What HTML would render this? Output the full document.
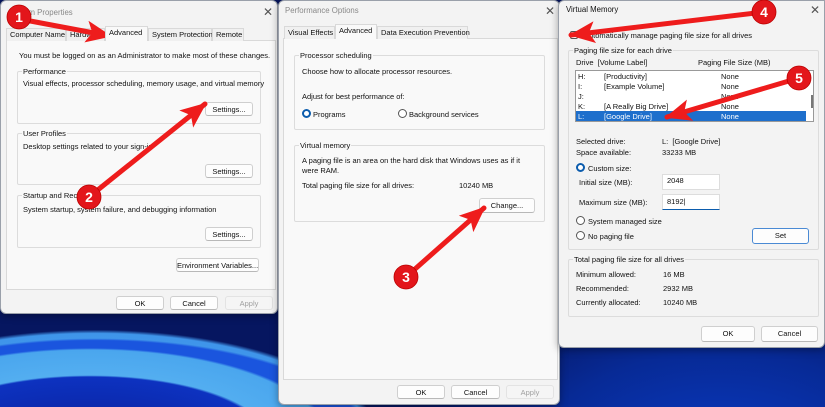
<!DOCTYPE html>
<html><head><meta charset="utf-8"><style>
*{margin:0;padding:0;box-sizing:border-box}
body{width:825px;height:407px;overflow:hidden;position:relative;font-family:"Liberation Sans",sans-serif;font-size:7.5px;color:#111;
background:
radial-gradient(ellipse 250px 90px at 90px 440px,#0a1f9a 0%,#0d32c0 70%,transparent 72%),
radial-gradient(ellipse 262px 100px at 90px 440px,#6cc4f6 0%,#4aa6ee 90%,transparent 92%),
radial-gradient(ellipse 290px 110px at 95px 445px,#1a55de 0%,#1a55de 95%,transparent 97%),
radial-gradient(ellipse 300px 120px at 95px 445px,#4aa0ee 0%,#3f95ea 93%,transparent 96%),
radial-gradient(ellipse 420px 260px at 720px 470px,#0a3cc8 0%,#072a96 45%,#061660 75%),
linear-gradient(90deg,#1444d8,#1040cc 35%,#0a2a90 60%,#061a55)}
.w{position:absolute;background:#f3f3f3;border:1px solid #9aa0aa;border-radius:6px;box-shadow:0 2px 8px rgba(0,0,0,.35);overflow:hidden}
.t{position:absolute;white-space:nowrap;line-height:9px}
.g{color:#888}
.btn{position:absolute;background:#fdfdfd;border:1px solid #cfcfcf;border-bottom-color:#b8b8b8;border-radius:3px;text-align:center;line-height:13px;white-space:nowrap}
.dis{background:#f5f5f5;color:#a0a0a0;border-color:#e3e3e3}
.grp{position:absolute;border:1px solid #dcdcdc;border-radius:2px}
.gl{position:absolute;background:#f9f9f9;padding:0 1px;line-height:9px;white-space:nowrap}
.panel{position:absolute;background:#f9f9f9;border:1px solid #d9d9d9}
.tab{position:absolute;line-height:12px;white-space:nowrap;border:1px solid #d9d9d9;border-bottom:none;background:#f0f0f0;padding:0 3px;height:13px}
.tab.a{background:#f9f9f9;height:15px;z-index:2}
.x{position:absolute;font-size:12px;color:#555;line-height:12px}
.rad{position:absolute;width:9px;height:9px;border-radius:50%;border:1px solid #555;background:#fff}
.rad.on{border:2.5px solid #0b5cad;background:#fff}
</style></head><body>

<!-- Window 1 -->
<div class="w" style="left:0;top:0;width:278px;height:314px">
 <div class="t g" style="left:8px;top:7px;font-size:7.8px">System Properties</div>
 <div class="x" style="left:262px;top:5px">✕</div>
 <div class="panel" style="left:5px;top:39px;width:270px;height:250px"></div>
 <div class="tab" style="left:5px;top:27px;width:60px">Computer Name</div>
 <div class="tab" style="left:65px;top:27px;width:39px">Hardware</div>
 <div class="tab a" style="left:104px;top:25px;width:43px">Advanced</div>
 <div class="tab" style="left:147px;top:27px;width:64px">System Protection</div>
 <div class="tab" style="left:211px;top:27px;width:32px">Remote</div>
 <div class="t" style="left:18px;top:50px">You must be logged on as an Administrator to make most of these changes.</div>
 <div class="grp" style="left:16px;top:70px;width:244px;height:53px"></div>
 <div class="gl" style="left:21px;top:66px">Performance</div>
 <div class="t" style="left:22px;top:78px">Visual effects, processor scheduling, memory usage, and virtual memory</div>
 <div class="btn" style="left:204px;top:101px;width:48px;height:14px">Settings...</div>
 <div class="grp" style="left:16px;top:132px;width:244px;height:52px"></div>
 <div class="gl" style="left:21px;top:128px">User Profiles</div>
 <div class="t" style="left:22px;top:141px">Desktop settings related to your sign-in</div>
 <div class="btn" style="left:204px;top:163px;width:48px;height:14px">Settings...</div>
 <div class="grp" style="left:16px;top:194px;width:244px;height:53px"></div>
 <div class="gl" style="left:21px;top:190px">Startup and Recovery</div>
 <div class="t" style="left:22px;top:204px">System startup, system failure, and debugging information</div>
 <div class="btn" style="left:204px;top:226px;width:48px;height:14px">Settings...</div>
 <div class="btn" style="left:175px;top:257px;width:83px;height:14px">Environment Variables...</div>
 <div class="btn" style="left:115px;top:295px;width:48px;height:14px">OK</div>
 <div class="btn" style="left:169px;top:295px;width:48px;height:14px">Cancel</div>
 <div class="btn dis" style="left:224px;top:295px;width:48px;height:14px">Apply</div>
</div>

<!-- Window 2 -->
<div class="w" style="left:278px;top:0;width:282px;height:405px">
 <div class="t g" style="left:6px;top:5px;font-size:7.8px">Performance Options</div>
 <div class="x" style="left:266px;top:4px">✕</div>
 <div class="panel" style="left:4px;top:37px;width:275px;height:342px"></div>
 <div class="tab" style="left:5px;top:25px;width:51px">Visual Effects</div>
 <div class="tab a" style="left:56px;top:23px;width:42px">Advanced</div>
 <div class="tab" style="left:98px;top:25px;width:91px">Data Execution Prevention</div>
 <div class="grp" style="left:15px;top:54px;width:251px;height:75px"></div>
 <div class="gl" style="left:20px;top:50px">Processor scheduling</div>
 <div class="t" style="left:23px;top:66px">Choose how to allocate processor resources.</div>
 <div class="t" style="left:23px;top:91px">Adjust for best performance of:</div>
 <div class="rad on" style="left:23px;top:108px"></div>
 <div class="t" style="left:34px;top:109px">Programs</div>
 <div class="rad" style="left:119px;top:108px"></div>
 <div class="t" style="left:130px;top:109px">Background services</div>
 <div class="grp" style="left:15px;top:144px;width:251px;height:77px"></div>
 <div class="gl" style="left:20px;top:140px">Virtual memory</div>
 <div class="t" style="left:23px;top:155px">A paging file is an area on the hard disk that Windows uses as if it</div>
 <div class="t" style="left:23px;top:165px">were RAM.</div>
 <div class="t" style="left:23px;top:180px">Total paging file size for all drives:</div>
 <div class="t" style="left:180px;top:180px">10240 MB</div>
 <div class="btn" style="left:200px;top:197px;width:56px;height:15px">Change...</div>
 <div class="btn" style="left:118px;top:384px;width:48px;height:14px">OK</div>
 <div class="btn" style="left:172px;top:384px;width:49px;height:14px">Cancel</div>
 <div class="btn dis" style="left:227px;top:384px;width:48px;height:14px">Apply</div>
</div>

<!-- Window 3 -->
<div class="w" style="left:558px;top:0;width:267px;height:348px;border-radius:6px 0 6px 6px">
 <div class="t" style="left:7px;top:4px;font-size:7.8px">Virtual Memory</div>
 <div class="x" style="left:251px;top:3px">✕</div>
 <div style="position:absolute;left:11px;top:30px;width:8px;height:8px;border:1px solid #555;border-radius:2px;background:#fff"></div>
 <div class="t" style="left:25px;top:30px">Automatically manage paging file size for all drives</div>
 <div class="grp" style="left:9px;top:49px;width:251px;height:200px"></div>
 <div class="gl" style="left:14px;top:45px;background:#f3f3f3">Paging file size for each drive</div>
 <div class="t" style="left:17px;top:57px">Drive&nbsp; [Volume Label]</div>
 <div class="t" style="left:139px;top:57px">Paging File Size (MB)</div>
 <div style="position:absolute;left:16px;top:69px;width:239px;height:52px;background:#fff;border:1px solid #999"></div>
 <div style="position:absolute;left:17px;top:110px;width:230px;height:10px;background:#1e6fcc"></div>
 <div style="position:absolute;left:252px;top:94px;width:1.5px;height:13px;background:#777"></div>
 <div class="t" style="left:19px;top:71px">H:</div><div class="t" style="left:45px;top:71px">[Productivity]</div><div class="t" style="left:162px;top:71px">None</div>
 <div class="t" style="left:19px;top:81px">I:</div><div class="t" style="left:45px;top:81px">[Example Volume]</div><div class="t" style="left:162px;top:81px">None</div>
 <div class="t" style="left:19px;top:91px">J:</div><div class="t" style="left:162px;top:91px">None</div>
 <div class="t" style="left:19px;top:101px">K:</div><div class="t" style="left:45px;top:101px">[A Really Big Drive]</div><div class="t" style="left:162px;top:101px">None</div>
 <div class="t" style="left:19px;top:111px;color:#fff">L:</div><div class="t" style="left:45px;top:111px;color:#fff">[Google Drive]</div><div class="t" style="left:162px;top:111px;color:#fff">None</div>
 <div class="t" style="left:17px;top:136px">Selected drive:</div><div class="t" style="left:103px;top:136px">L:&nbsp; [Google Drive]</div>
 <div class="t" style="left:17px;top:147px">Space available:</div><div class="t" style="left:103px;top:147px">33233 MB</div>
 <div class="rad on" style="left:17px;top:162px"></div><div class="t" style="left:29px;top:163px">Custom size:</div>
 <div class="t" style="left:20px;top:177px">Initial size (MB):</div>
 <div style="position:absolute;left:103px;top:173px;width:58px;height:16px;background:#fff;border:1px solid #ddd"></div>
 <div class="t" style="left:108px;top:175px">2048</div>
 <div class="t" style="left:20px;top:197px">Maximum size (MB):</div>
 <div style="position:absolute;left:103px;top:193px;width:58px;height:16px;background:#fff;border:1px solid #ddd;border-bottom:1.5px solid #0b5cad"></div>
 <div class="t" style="left:108px;top:196px">8192|</div>
 <div class="rad" style="left:17px;top:215px"></div><div class="t" style="left:29px;top:216px">System managed size</div>
 <div class="rad" style="left:17px;top:230px"></div><div class="t" style="left:29px;top:231px">No paging file</div>
 <div class="btn" style="left:193px;top:227px;width:57px;height:16px;border-color:#4a8ad4;line-height:14px">Set</div>
 <div class="grp" style="left:9px;top:258px;width:251px;height:58px"></div>
 <div class="gl" style="left:14px;top:254px;background:#f3f3f3">Total paging file size for all drives</div>
 <div class="t" style="left:17px;top:269px">Minimum allowed:</div><div class="t" style="left:104px;top:269px">16 MB</div>
 <div class="t" style="left:17px;top:283px">Recommended:</div><div class="t" style="left:104px;top:283px">2932 MB</div>
 <div class="t" style="left:17px;top:297px">Currently allocated:</div><div class="t" style="left:104px;top:297px">10240 MB</div>
 <div class="btn" style="left:142px;top:325px;width:54px;height:16px;line-height:14px">OK</div>
 <div class="btn" style="left:202px;top:325px;width:57px;height:16px;line-height:14px">Cancel</div>
</div>

<svg style="position:absolute;left:0;top:0" width="825" height="407">
<defs><marker id="h" markerUnits="userSpaceOnUse" markerWidth="26" markerHeight="22" refX="24" refY="11" orient="auto"><path d="M0,0 L26,11 L0,22 L6,11 z" fill="#ee1c1c"/></marker></defs>
<g stroke="#ee1c1c" stroke-width="5" stroke-linecap="round" fill="none" marker-end="url(#h)">
<line x1="25" y1="20" x2="110" y2="36"/>
<line x1="89" y1="197" x2="205" y2="104"/>
<line x1="406" y1="277" x2="484" y2="208"/>
<line x1="764" y1="12" x2="571" y2="35"/>
<line x1="799" y1="78" x2="667" y2="117"/>
</g>
<g fill="#e3161b" stroke="#b00" stroke-width="0.8">
<circle cx="19" cy="17" r="12"/><circle cx="89" cy="197" r="12"/><circle cx="406" cy="277" r="12"/><circle cx="764" cy="12" r="12"/><circle cx="799" cy="78" r="12"/>
</g>
<g fill="#fff" font-family="Liberation Sans" font-weight="bold" font-size="14" text-anchor="middle">
<text x="19" y="22">1</text><text x="89" y="202">2</text><text x="406" y="282">3</text><text x="764" y="17">4</text><text x="799" y="83">5</text>
</g>
</svg>
</body></html>
